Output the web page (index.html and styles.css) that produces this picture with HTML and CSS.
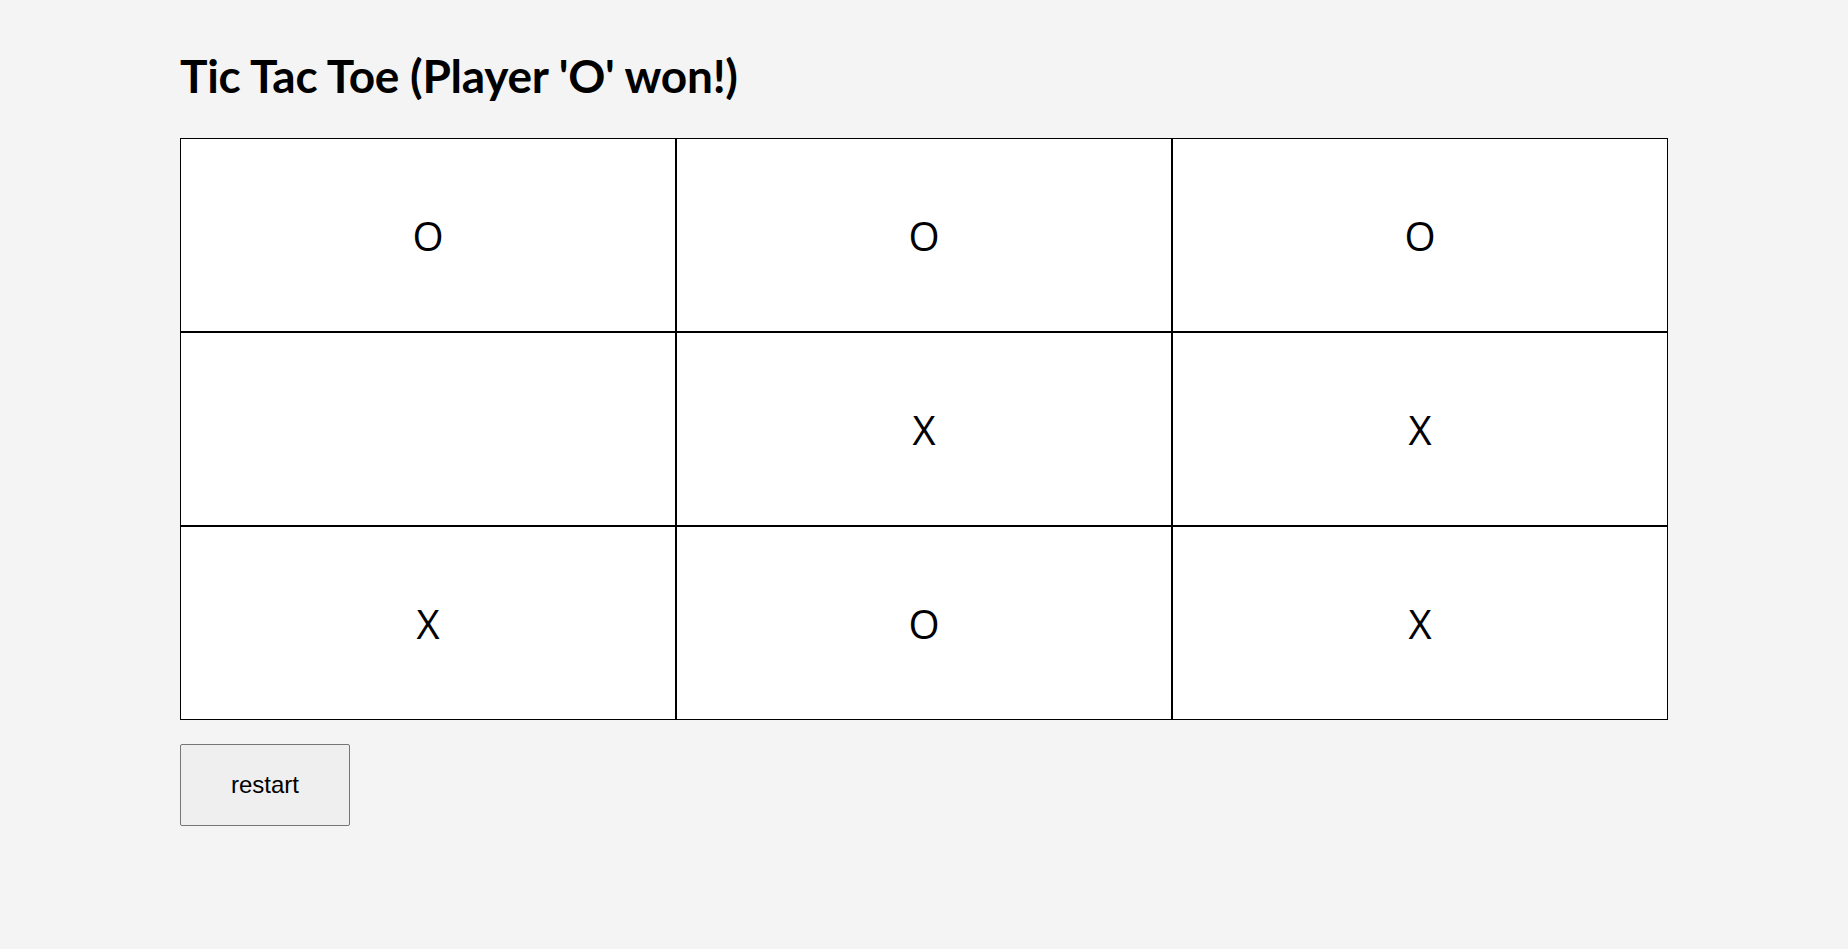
FILE: index.html
```html
<!DOCTYPE html>
<html>
<head>
<meta charset="utf-8">
<link rel="stylesheet" href="styles.css">
</head>
<body>
<main class="game">
  <h1 class="title">Tic Tac Toe (Player 'O' won!)</h1>
  <div class="board">
    <div class="cell">O</div>
    <div class="cell">O</div>
    <div class="cell">O</div>
    <div class="cell"></div>
    <div class="cell">X</div>
    <div class="cell">X</div>
    <div class="cell">X</div>
    <div class="cell">O</div>
    <div class="cell">X</div>
  </div>
  <button class="restart">restart</button>
</main>
</body>
</html>
```
FILE: styles.css
```css
html, body {
  margin: 0;
  padding: 0;
  background: #f4f4f4;
}
.game {
  padding: 0 180px;
  display: flex;
  flex-direction: column;
  align-items: flex-start;
}
.title {
  font-family: Lato, "Liberation Sans", sans-serif;
  font-weight: 700;
  font-size: 46px;
  line-height: 56px;
  margin: 48px 0 34px;
  color: #000;
  letter-spacing: -0.25px;
}
.board {
  display: grid;
  grid-template-columns: repeat(3, 496px);
  grid-auto-rows: 194px;
}
.cell {
  border: 1px solid #000;
  background: #fff;
  display: flex;
  align-items: center;
  justify-content: center;
  font-family: "Open Sans", sans-serif;
  font-size: 40px;
  color: #000;
}
.restart {
  margin-top: 24px;
  width: 170px;
  height: 82px;
  background: #efefef;
  border: 1px solid #767676;
  border-radius: 2px;
  font-family: "Liberation Sans", Arial, sans-serif;
  font-size: 24px;
  color: #000;
  padding: 0;
}
```
